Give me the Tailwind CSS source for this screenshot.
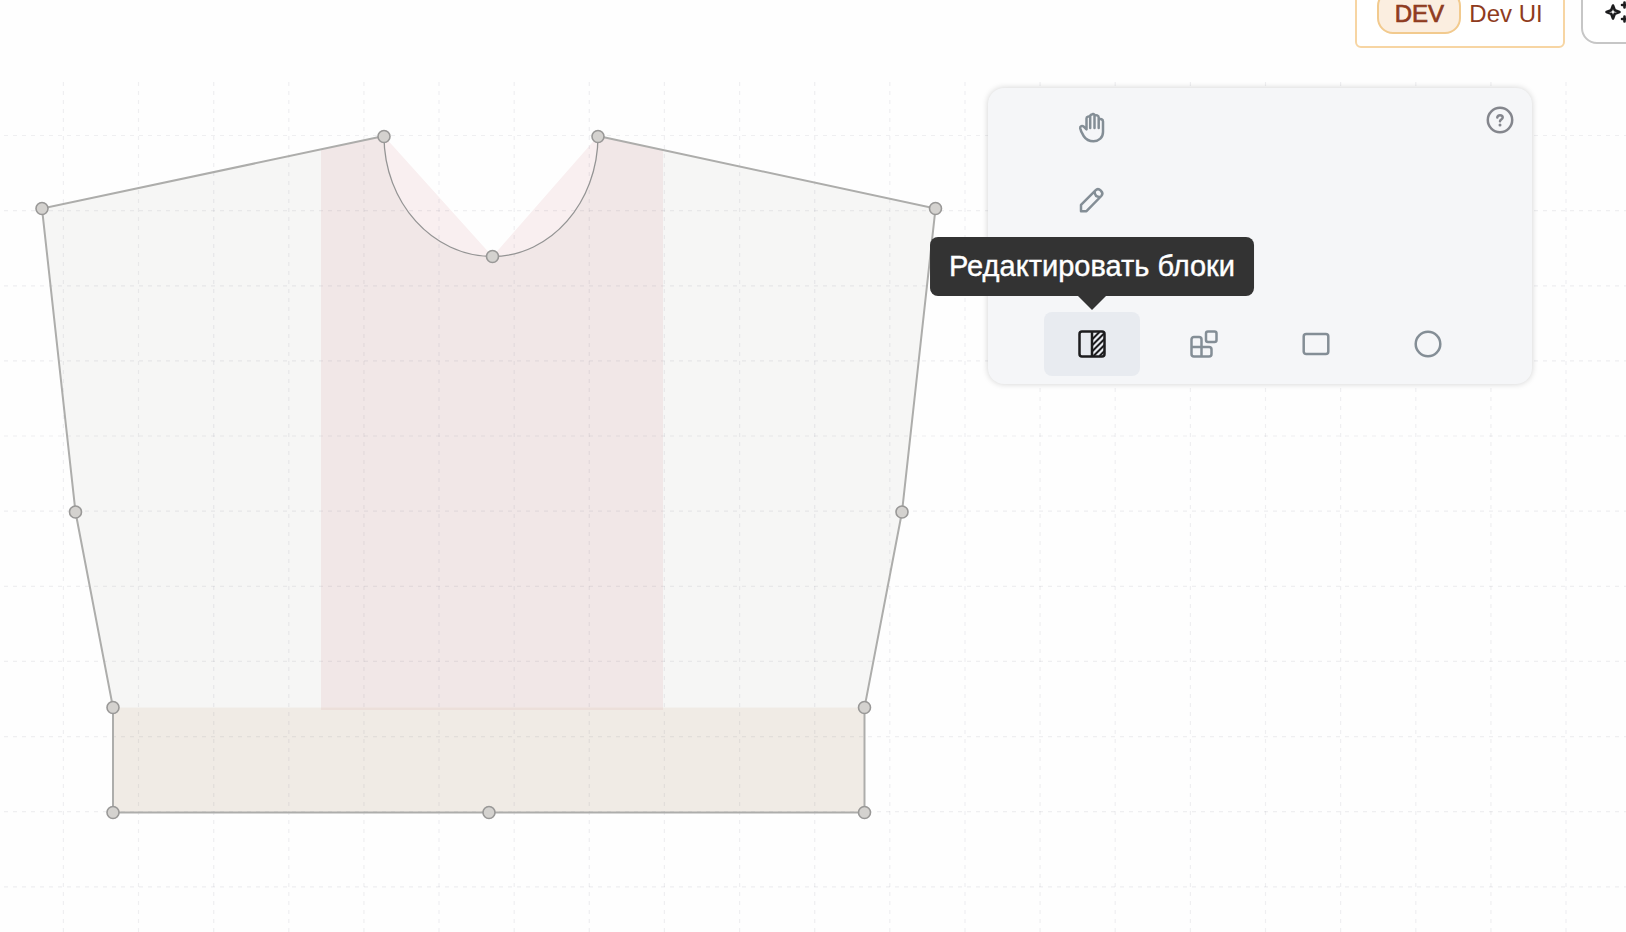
<!DOCTYPE html>
<html lang="ru">
<head>
    <meta charset="UTF-8">
    <meta name="viewport" content="width=device-width, initial-scale=1.0">
    <title>Dev UI</title>
    <script src="https://cdn.jsdelivr.net/npm/@tailwindcss/browser@4"></script>
</head>
<body class="h-screen overflow-hidden bg-[#fefefe] font-['Liberation_Sans',Arial,sans-serif] flex flex-col">
    <!-- Header -->
    <header class="h-20 shrink-0 flex justify-end items-start gap-4">
        <button type="button" class="-mt-6 h-18 w-[210px] shrink-0 flex items-center justify-center gap-2 rounded-md border-2 border-[#f7d5a3] bg-white text-2xl text-[#8f3b20]">
            <span class="flex h-11 w-[84px] items-center justify-center rounded-2xl border-2 border-[#f2ca8e] bg-[#fbeee0] pt-1 [-webkit-text-stroke:0.7px_#8f3b20]">DEV</span>
            <span class="pt-1">Dev UI</span>
        </button>
        <button type="button" aria-label="AI" class="-mt-5 -mr-[19px] h-16 w-16 shrink-0 flex items-center justify-center rounded-2xl border-2 border-[#c6c6c6] bg-white text-[#1c1c1e]">
            <svg class="size-8" viewBox="0 0 32 32" fill="none" stroke="currentColor" stroke-width="2.6" stroke-linejoin="round" stroke-linecap="round">
                <path d="M16 9.500l1.800 4.700 4.700 1.800-4.700 1.800-1.800 4.700-1.800-4.700-4.700-1.800 4.700-1.800z"/>
                <path d="M27.500 6.500v5M25 9h5M27.500 20.500v5M25 23h5"/>
            </svg>
        </button>
    </header>

    <!-- Canvas -->
    <main class="relative flex-1 overflow-hidden">
        <svg class="block h-full w-full" role="img" aria-label="Выкройка">
            <!-- blocks -->
            <path d="M321 70L384 56L492.500 176.500L598 56L663 70V630H321Z" fill="#f9eff0"/>
            <path d="M42 128.500L384 56C384 122.500 432.500 176.500 492.500 176.500C550.500 176.500 598 122.500 598 56L935.500 128.500L902 432L864.500 627.500H113L75.500 432Z" fill="#787864" fill-opacity=".06"/>
            <path d="M113 627.500H864.500V732.500H113Z" fill="#b79e82" fill-opacity=".2"/>

            <!-- grid -->
            <g fill="none" stroke="#78788c" stroke-opacity=".11" stroke-width="1.200" stroke-dasharray="4 5">
                <path d="M63.400 2V852M138.500 2V852M213.700 2V852M288.800 2V852M363.900 2V852M439 2V852M514.200 2V852M589.300 2V852M664.400 2V852M739.600 2V852M814.700 2V852M889.800 2V852M965 2V852M1040.100 2V852M1115.200 2V852M1190.400 2V852M1265.500 2V852M1340.600 2V852M1415.800 2V852M1490.900 2V852M1566 2V852"/>
                <path d="M4 55.500H2400M4 130.600H2400M4 205.800H2400M4 280.900H2400M4 356H2400M4 431.200H2400M4 506.300H2400M4 581.400H2400M4 656.600H2400M4 731.700H2400M4 806.800H2400"/>
            </g>

            <!-- outline -->
            <g fill="none">
                <path d="M384 56L42 128.500L75.500 432L113 627.500V732.500H864.500V627.500L902 432L935.500 128.500L598 56" stroke="#adadab" stroke-width="2"/>
                <path d="M384 56C384 122.500 432.500 176.500 492.500 176.500C550.500 176.500 598 122.500 598 56" stroke="#949494" stroke-width="1.300"/>
            </g>

            <!-- points -->
            <g fill="#d4d2cf" stroke="#999897" stroke-width="1.600">
                <circle cx="384" cy="56.500" r="6"/>
                <circle cx="598" cy="56.500" r="6"/>
                <circle cx="492.500" cy="176.500" r="6"/>
                <circle cx="42" cy="128.500" r="6"/>
                <circle cx="935.500" cy="128.500" r="6"/>
                <circle cx="75.500" cy="432" r="6"/>
                <circle cx="902" cy="432" r="6"/>
                <circle cx="113" cy="627.500" r="6"/>
                <circle cx="864.500" cy="627.500" r="6"/>
                <circle cx="113" cy="732.500" r="6"/>
                <circle cx="489" cy="732.500" r="6"/>
                <circle cx="864.500" cy="732.500" r="6"/>
            </g>
        </svg>

        <!-- Toolbar -->
        <div class="absolute top-2 right-[94px] w-[544px] rounded-2xl bg-[#f5f6f8] p-2 shadow-[0_0_6px_rgba(0,0,0,0.18)]">
            <div class="mx-auto grid w-[432px] grid-cols-4 grid-rows-4 gap-x-4 gap-y-2 text-[#848e96]">
                <button type="button" aria-label="Перемещение" class="col-start-1 row-start-1 flex h-16 items-center justify-center rounded-lg">
                    <svg class="h-8 w-7" viewBox="0 0 28 32" fill="none" stroke="currentColor" stroke-width="2.500" stroke-linecap="round" stroke-linejoin="round">
                        <path d="M8.500 17V6.500C8.500 4.400 11 4 12.200 5.200M12.200 16V4.200C12.200 3.200 13 2.600 14 2.600 14.100 1.600 16.400 1.600 16.500 3.400V16M16.500 3.600C18 2.700 20.700 3.200 20.700 5.500V16M20.700 7.600C22.500 6.400 25 7.300 25 9.500V20C25 25.500 21 29.200 15.500 29.200 10.500 29.200 8 27.500 5.800 24.200 4 21.500 2.600 18.600 2.200 16.200 1.900 14 4.200 13.500 5.700 14.600L8.500 17.300"/>
                    </svg>
                </button>
                <button type="button" aria-label="Рисование" class="col-start-1 row-start-2 flex h-16 items-center justify-center rounded-lg">
                    <svg class="size-7" viewBox="0 0 28 28" fill="none" stroke="currentColor" stroke-width="2.500" stroke-linejoin="round">
                        <path d="M3 25.200V18.800L17.500 4.300C20.800 1 26.500 6.500 23.300 10L8.500 25.200ZM16.600 5.500C16.600 9 18.500 11 22 11"/>
                    </svg>
                </button>
                <button type="button" aria-label="Редактировать блоки" aria-describedby="tip" class="relative col-start-1 row-start-4 flex h-16 items-center justify-center rounded-lg bg-[#e8ebf0] text-[#1c1c1e]">
                    <svg class="size-7" viewBox="0 0 28 28" fill="none" stroke="currentColor" stroke-width="2.500">
                        <rect x="1.500" y="1.500" width="25" height="25" rx="2.500"/>
                        <path d="M14 1.500V26.500"/>
                        <path d="M14 9.500L21.500 2M14 15.500L26.500 3M14 21.500L26.500 9M15.500 26L26.500 15M21.500 26L26.500 21" stroke-width="2"/>
                    </svg>
                    <span id="tip" role="tooltip" class="absolute bottom-20 left-1/2 flex h-[59px] -translate-x-1/2 items-center rounded-lg bg-[#333333] px-[19px] text-[29px] whitespace-nowrap text-white [-webkit-text-stroke:0.4px_white]">
                        Редактировать блоки
                        <svg class="absolute top-full left-1/2 h-[14px] w-7 -translate-x-1/2" viewBox="0 0 28 14" fill="#333333" stroke="none"><path d="M0 0H28L14 14Z"/></svg>
                    </span>
                </button>
                <button type="button" aria-label="Блоки" class="col-start-2 row-start-4 flex h-16 items-center justify-center rounded-lg">
                    <svg class="size-7" viewBox="0 0 28 28" fill="none" stroke="currentColor" stroke-width="2.500">
                        <rect x="16" y="1.500" width="10.500" height="10.500" rx="2"/>
                        <path d="M1.500 17H19A2.500 2.500 0 0 1 21.500 19.500V24A2.500 2.500 0 0 1 19 26.500H4A2.500 2.500 0 0 1 1.500 24V9.500A2.500 2.500 0 0 1 4 7H9A2.500 2.500 0 0 1 11.500 9.500V26.500"/>
                    </svg>
                </button>
                <button type="button" aria-label="Прямоугольник" class="col-start-3 row-start-4 flex h-16 items-center justify-center rounded-lg">
                    <svg class="size-7" viewBox="0 0 28 28" fill="none" stroke="currentColor" stroke-width="2.500">
                        <rect x="1.700" y="4" width="24.600" height="20" rx="2.500"/>
                    </svg>
                </button>
                <button type="button" aria-label="Круг" class="col-start-4 row-start-4 flex h-16 items-center justify-center rounded-lg">
                    <svg class="size-7" viewBox="0 0 28 28" fill="none" stroke="currentColor" stroke-width="2.500">
                        <circle cx="14" cy="14" r="12.300"/>
                    </svg>
                </button>
            </div>
            <button type="button" aria-label="Справка" class="absolute top-[18px] right-[18px] text-[#84868d]">
                <svg class="size-7" viewBox="0 0 28 28" fill="none" stroke="currentColor" stroke-width="2.500" stroke-linecap="round">
                    <circle cx="14" cy="14" r="12.200"/>
                    <path d="M11.300 11.500C11.300 8.600 16.700 8.600 16.700 11.600 16.700 13.600 14 13.500 14 15.300"/>
                    <circle cx="14" cy="19" r="1.500" fill="currentColor" stroke="none"/>
                </svg>
            </button>
        </div>
    </main>
</body>
</html>
